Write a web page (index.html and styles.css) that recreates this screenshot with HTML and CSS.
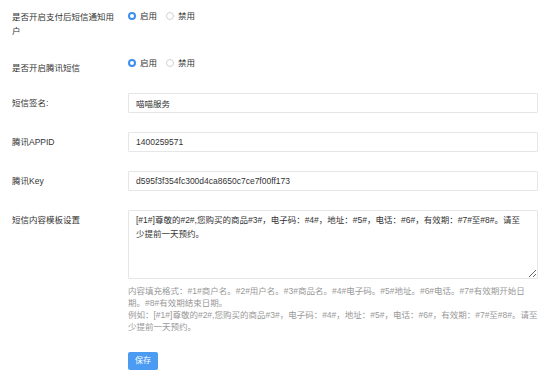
FILE: index.html
```html
<!DOCTYPE html>
<html lang="zh-CN">
<head>
<meta charset="utf-8">
<title>短信设置</title>
<link rel="stylesheet" href="styles.css">
</head>
<body>
<form class="form">
  <div class="row row-first">
    <div class="label label-r1">是否开启支付后短信通知用户</div>
    <div class="field radios">
      <span class="radio"><span class="dot on"></span>启用</span>
      <span class="radio"><span class="dot"></span>禁用</span>
    </div>
  </div>
  <div class="row row-second">
    <div class="label label-r2">是否开启腾讯短信</div>
    <div class="field radios">
      <span class="radio"><span class="dot on"></span>启用</span>
      <span class="radio"><span class="dot"></span>禁用</span>
    </div>
  </div>
  <div class="row">
    <div class="label">短信签名:</div>
    <div class="field"><input class="input" type="text" value="喵喵服务"></div>
  </div>
  <div class="row">
    <div class="label">腾讯APPID</div>
    <div class="field"><input class="input" type="text" value="1400259571"></div>
  </div>
  <div class="row">
    <div class="label">腾讯Key</div>
    <div class="field"><input class="input" type="text" value="d595f3f354fc300d4ca8650c7ce7f00ff173"></div>
  </div>
  <div class="row row-last">
    <div class="label">短信内容模板设置</div>
    <div class="field">
      <textarea class="textarea">[#1#]尊敬的#2#,您购买的商品#3#，电子码：#4#，地址：#5#，电话：#6#，有效期：#7#至#8#。请至少提前一天预约。</textarea>
      <div class="help">内容填充格式：#1#商户名。#2#用户名。#3#商品名。#4#电子码。#5#地址。#6#电话。#7#有效期开始日期。#8#有效期结束日期。<br>例如：[#1#]尊敬的#2#,您购买的商品#3#，电子码：#4#，地址：#5#，电话：#6#，有效期：#7#至#8#。请至少提前一天预约。</div>
      <button class="btn" type="button">保存</button>
    </div>
  </div>
</form>
</body>
</html>
```
FILE: styles.css
```css
html, body {
  margin: 0;
  padding: 0;
  background: #ffffff;
}
body {
  font-family: "Liberation Sans", "Noto Sans CJK SC", sans-serif;
  font-size: 8.5px;
  color: #333333;
}
.form {
  padding: 6px 16px 0 12px;
}
.row {
  display: flex;
  align-items: flex-start;
  margin-bottom: 19px;
}
.row-first {
  margin-bottom: 15px;
}
.row-second {
  margin-bottom: 18px;
}
.row-last {
  margin-bottom: 0;
}
.label {
  width: 106px;
  flex: none;
  margin-right: 10px;
  padding-top: 3px;
  line-height: 14px;
  color: #333333;
}
.label-r1 {
  padding-top: 4px;
}
.label-r2 {
  padding-top: 8px;
}
.field {
  flex: 1;
  min-width: 0;
}
.radios {
  display: flex;
  align-items: center;
  height: 20px;
  gap: 9px;
}
.radio {
  display: inline-flex;
  align-items: center;
  line-height: 12px;
  color: #333333;
}
.dot {
  box-sizing: border-box;
  width: 8px;
  height: 8px;
  border-radius: 50%;
  border: 1px solid #d2d2d2;
  margin-right: 4px;
  background: #fff;
}
.dot.on {
  border: 2.5px solid #3d8ef0;
  background: #fff;
}
.input {
  display: block;
  box-sizing: border-box;
  width: 100%;
  height: 20px;
  margin: 0;
  padding: 0 7px;
  border: 1px solid #e6e6e6;
  border-radius: 1px;
  font-family: inherit;
  font-size: 8.5px;
  color: #333333;
  background: #fff;
  outline: none;
}
.textarea {
  display: block;
  box-sizing: border-box;
  width: 100%;
  height: 69px;
  margin: 0;
  padding: 2px 12px 2px 7px;
  border: 1px solid #e6e6e6;
  border-radius: 1px;
  font-family: inherit;
  font-size: 8.5px;
  line-height: 14px;
  color: #333333;
  background: #fff;
  outline: none;
}
.help {
  margin-top: 6px;
  line-height: 12px;
  color: #999999;
}
.btn {
  display: block;
  margin-top: 19px;
  width: 30px;
  height: 18px;
  padding: 0;
  border: none;
  border-radius: 2px;
  background: #4b9bf2;
  color: #ffffff;
  font-family: inherit;
  font-size: 8px;
  line-height: 18px;
  text-align: center;
}
```
